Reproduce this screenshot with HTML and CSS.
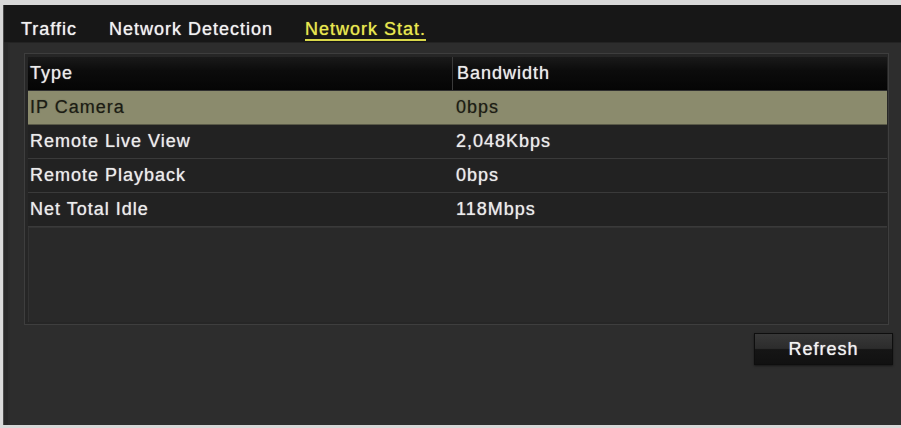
FILE: index.html
```html
<!DOCTYPE html>
<html>
<head>
<meta charset="utf-8">
<link rel="stylesheet" href="styles.css">
</head>
<body>
<div class="panel">
  <div class="tabs">
    <span class="tab">Traffic</span>
    <span class="tab">Network Detection</span>
    <span class="tab active">Network Stat.</span>
  </div>
  <div class="table">
    <div class="row head">
      <div class="c1">Type</div>
      <div class="c2">Bandwidth</div>
    </div>
    <div class="row sel">
      <div class="c1">IP Camera</div>
      <div class="c2">0bps</div>
    </div>
    <div class="row">
      <div class="c1">Remote Live View</div>
      <div class="c2">2,048Kbps</div>
    </div>
    <div class="row">
      <div class="c1">Remote Playback</div>
      <div class="c2">0bps</div>
    </div>
    <div class="row">
      <div class="c1">Net Total Idle</div>
      <div class="c2">118Mbps</div>
    </div>
    <div class="empty"></div>
  </div>
  <div class="actions">
    <button class="btn">Refresh</button>
  </div>
</div>
</body>
</html>
```

FILE: styles.css
```css
html, body {
  margin: 0;
  padding: 0;
}
body {
  background: #d8d8d8;
  width: 901px;
  height: 428px;
  overflow: hidden;
  font-family: "Liberation Sans", Arial, sans-serif;
  font-size: 18px;
  letter-spacing: 1px;
}
.panel {
  margin: 5px 0 0 3px;
  height: 420px;
  background: #2d2d2d;
  border-left: 1px solid #4a4a4a;
  box-shadow: inset 4px 0 0 #262626, inset 6px 0 0 #2a2a2a;
  display: flex;
  flex-direction: column;
}
.tabs {
  height: 38px;
  background: #171717;
  border-bottom: 1px solid #232323;
  display: flex;
  align-items: flex-start;
  gap: 32px;
  padding-left: 17px;
  box-sizing: border-box;
}
.tab {
  color: #f2f2f2;
  padding-top: 14px;
  line-height: 20px;
  text-shadow: 0 0 1px rgba(255,255,255,0.8);
}
.tab.active {
  color: #e9e84e;
  text-shadow: 0 0 1px rgba(233,232,78,0.8);
  border-bottom: 2px solid #d9d84a;
  padding-bottom: 0;
}
.table {
  margin: 10px 12px 0 20px;
  height: 272px;
  box-sizing: border-box;
  border: 1px solid #3e3e3e;
  padding: 3px 1px 2px 3px;
  background: #262626;
  display: flex;
  flex-direction: column;
}
.row {
  height: 34px;
  flex: none;
  display: flex;
  align-items: center;
  box-sizing: border-box;
  background: #222222;
  border-bottom: 1px solid #3a3a3a;
  color: #ececec;
  text-shadow: 0 0 1px rgba(255,255,255,0.7);
}
.row.head {
  height: 34px;
  background: linear-gradient(#1a1a1a 0%, #0c0c0c 40%, #050505 100%);
  border-bottom: 1px solid #303030;
}
.row.sel {
  background: #8b8b6d;
  color: #1c1c14;
  text-shadow: 0 0 1px rgba(28,28,20,0.5);
  border-bottom: 1px solid #5a5a48;
}
.c1 {
  width: 424px;
  padding-left: 2px;
  box-sizing: border-box;
}
.c2 {
  flex: 1;
  padding-left: 4px;
  align-self: stretch;
  display: flex;
  align-items: center;
}
.row.head .c2 {
  border-left: 1px solid #3a3a3a;
}
.empty {
  flex: 1;
  background: #292929;
  border-top: 1px solid #333;
  box-shadow: inset 1px 0 0 #333;
}
.actions {
  display: flex;
  justify-content: flex-end;
  padding: 8px 8px 0 0;
}
.btn {
  width: 139px;
  height: 32px;
  border: 1px solid #0e0e0e;
  background: linear-gradient(#383838 0%, #2c2c2c 48%, #151515 52%, #111111 100%);
  color: #f2f2f2;
  font-family: "Liberation Sans", Arial, sans-serif;
  font-size: 18px;
  letter-spacing: 1px;
  text-shadow: 0 0 1px rgba(255,255,255,0.8);
  padding: 0;
  box-shadow: 0 1px 2px rgba(0,0,0,0.5);
}
```
